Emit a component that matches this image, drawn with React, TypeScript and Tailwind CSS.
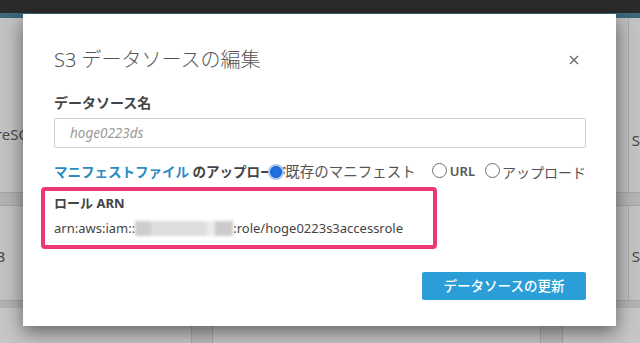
import React from "react";

const font = { fontFamily: '"Noto Sans", "Noto Sans CJK JP", sans-serif' };

function Radio({ checked }: { checked?: boolean }) {
  if (checked) {
    return (
      <span className="inline-flex w-[16px] h-[16px] rounded-full bg-[#a9c9ef] items-center justify-center shrink-0">
        <span className="w-[12px] h-[12px] rounded-full bg-[#1f6fe0] border border-[#1a5fc4]" />
      </span>
    );
  }
  return <span className="inline-block w-[15px] h-[15px] rounded-full border border-[#6f6f6f] bg-white shrink-0" />;
}

export default function App() {
  return (
    <div className="relative w-[640px] h-[343px] overflow-hidden bg-[#b9b9b9]" style={font}>
      {/* background page */}
      <div className="flex flex-col h-full">
        <div className="h-[13px] bg-[#2b2b2b] shrink-0" />
        <div className="h-[5px] bg-[#3b687c] shrink-0" />
        {/* row 1 */}
        <div className="flex h-[174px] shrink-0">
          <div className="w-[612px] shrink-0 bg-[#c3c3c3] pt-[106px] text-[15px] leading-[20px] text-[#4a4a4a] whitespace-nowrap">
            <span className="-ml-[44px] inline-block">PostgreSQL</span>
          </div>
          <div className="w-[18px] bg-[#bfbfbf] border-r border-[#a9a9a9]" />
          <div className="flex-1 bg-[#c3c3c3] pt-[112px] pl-[3px] text-[15px] leading-[20px] text-[#4a4a4a]">S</div>
        </div>
        <div className="h-[14px] bg-[#b3b3b3] border-y border-[#a5a5a5] shrink-0" />
        {/* row 2 */}
        <div className="flex h-[94px] shrink-0">
          <div className="w-[612px] shrink-0 bg-[#c3c3c3] pt-[40px] text-[15px] leading-[20px] text-[#4a4a4a] whitespace-nowrap">
            <span className="-ml-[56px] inline-block">MariaDB</span>
          </div>
          <div className="w-[18px] bg-[#bfbfbf] border-r border-[#a9a9a9]" />
          <div className="flex-1 bg-[#c3c3c3] pt-[40px] pl-[3px] text-[15px] leading-[20px] text-[#4a4a4a]">S</div>
        </div>
        <div className="h-[8px] bg-[#b3b3b3] border-t border-[#a5a5a5] shrink-0" />
        {/* row 3 */}
        <div className="flex flex-1">
          <div className="w-[192px] bg-[#c6c6c6] border-r border-[#a8a8a8]" />
          <div className="w-[20px] bg-[#bcbcbc]" />
          <div className="w-[329px] bg-[#c6c6c6] border-x border-[#a8a8a8]" />
          <div className="w-[21px] bg-[#bcbcbc]" />
          <div className="flex-1 bg-[#c6c6c6] border-l border-[#a8a8a8]" />
        </div>
      </div>

      {/* modal */}
      <div className="absolute left-[23px] top-[14px] w-[593px] h-[312px] bg-white shadow-[0_6px_18px_rgba(0,0,0,0.5)] pl-[31px] pr-[30px] pt-[32px] flex flex-col">
        <div className="flex items-center justify-between h-[28px]">
          <div className="text-[20px] leading-[28px] text-[#545454] font-light">S3 データソースの編集</div>
          <svg width="10" height="10" viewBox="0 0 10 10" className="mr-[7px]">
            <path d="M1 1 L9 9 M9 1 L1 9" stroke="#6b6b6b" strokeWidth="1.4" />
          </svg>
        </div>
        <div className="mt-[19px] text-[14px] leading-[20px] font-bold text-[#444]">データソース名</div>
        <div className="mt-[5px] h-[30px] border border-[#cfcfcf] rounded-[2px] flex items-center pl-[15px]">
          <span className="text-[13.5px] italic text-[#9a9a9a]">hoge0223ds</span>
        </div>
        <div className="relative mt-[14px] h-[20px] flex items-center whitespace-nowrap">
          <span className="text-[13.5px] leading-[20px] font-bold">
            <span className="text-[#2a8ac2]">マニフェストファイル</span>
            <span className="text-[#444]"> のアップロード</span>
          </span>
          <div className="absolute right-0 top-0 h-[20px] flex items-center text-[14px] text-[#555]">
            <Radio checked />
            <span className="ml-[1px] text-[14.5px]">既存のマニフェスト</span>
            <span className="ml-[16px]"><Radio /></span>
            <span className="ml-[3px] font-semibold text-[13px]">URL</span>
            <span className="ml-[10px]"><Radio /></span>
            <span className="ml-[2px]">アップロード</span>
          </div>
        </div>
        <div className="mt-[5px] -ml-[13px] w-[396px] border-[4px] border-[#ee3873] rounded-[4px] pl-[9px] pt-[3px] pb-[8px]">
          <div className="text-[13px] leading-[18px] font-bold text-[#444]">ロール ARN</div>
          <div className="mt-[7px] text-[13px] leading-[18px] text-[#444] flex items-center whitespace-nowrap">
            <span>arn:aws:iam::</span>
            <span className="inline-flex w-[98px] h-[15px] blur-[1.5px]">
              <span className="w-[16px] h-full bg-[#cdcdcd]" />
              <span className="flex-1 h-full bg-[#dedede]" />
              <span className="w-[8px] h-full bg-[#ececec]" />
              <span className="w-[18px] h-full bg-[#cbcbcb]" />
            </span>
            <span>:role/hoge0223s3accessrole</span>
          </div>
        </div>
        <div className="mt-[23px] flex justify-end">
          <div className="w-[164px] h-[28px] bg-[#2b9ed8] rounded-[2px] flex items-center justify-center text-white text-[13.5px] font-medium">
            データソースの更新
          </div>
        </div>
      </div>
    </div>
  );
}
